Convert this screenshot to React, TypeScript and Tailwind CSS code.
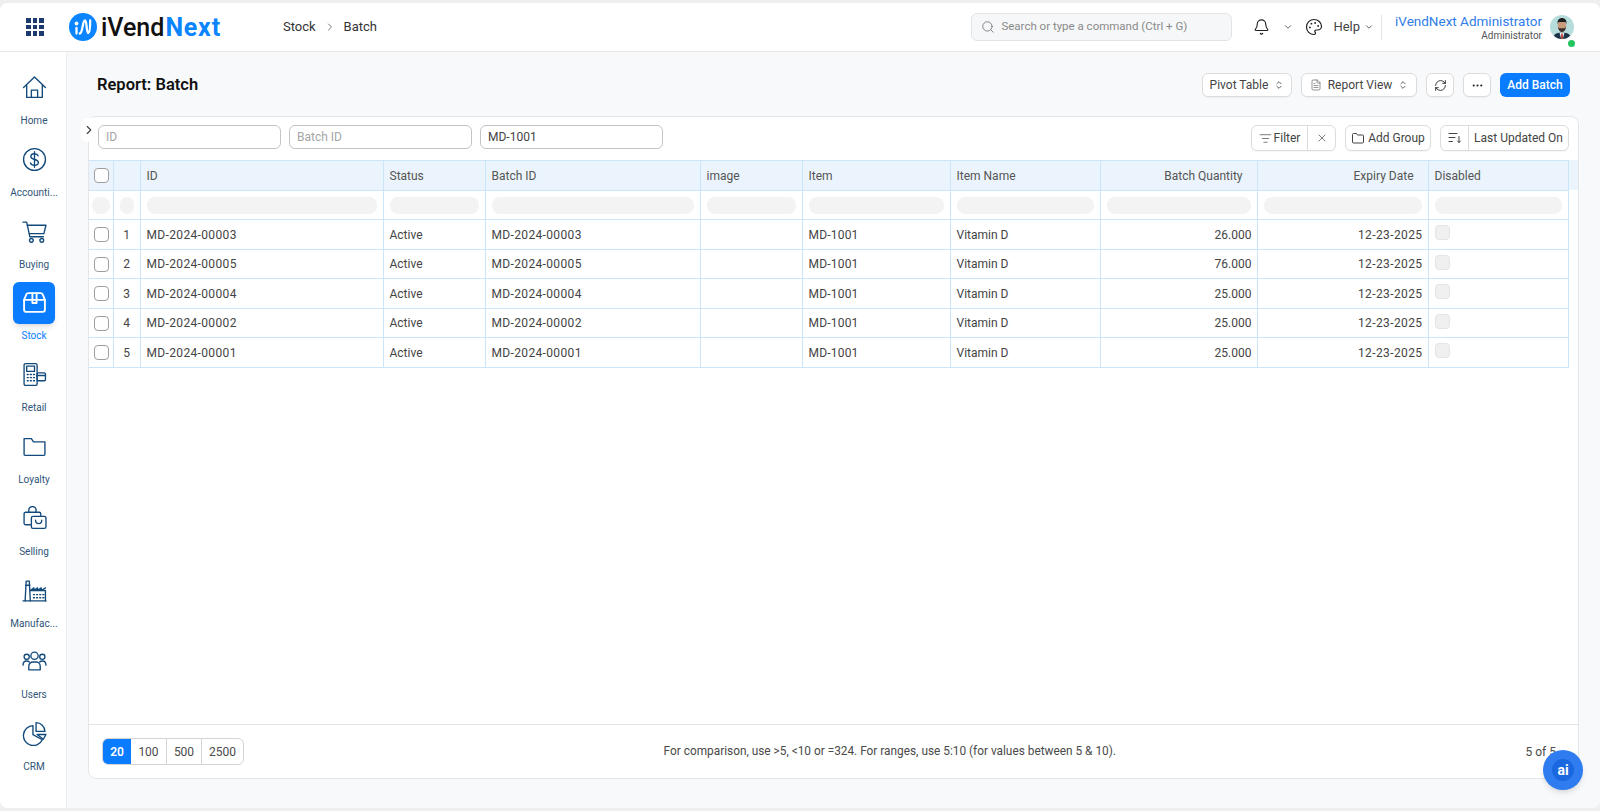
import React from "react";
import {
  Bell,
  ChevronDown,
  ChevronRight,
  ChevronsUpDown,
  Ellipsis,
  FileText,
  ListFilter,
  Palette,
  RefreshCw,
  Search,
  X,
} from "lucide-react";

const COLUMNS = [24, 27, 243, 102, 215, 102, 148, 150, 157, 171, 140];

const HEADERS = [
  { label: "ID" },
  { label: "Status" },
  { label: "Batch ID" },
  { label: "image" },
  { label: "Item" },
  { label: "Item Name" },
  { label: "Batch Quantity", right: true },
  { label: "Expiry Date", right: true },
  { label: "Disabled" },
];

const ROWS = [
  { id: "MD-2024-00003", qty: "26.000" },
  { id: "MD-2024-00005", qty: "76.000" },
  { id: "MD-2024-00004", qty: "25.000" },
  { id: "MD-2024-00002", qty: "25.000" },
  { id: "MD-2024-00001", qty: "25.000" },
];

function NavIcon({ children }: { children: React.ReactNode }) {
  return (
    <svg
      viewBox="0 0 24 24"
      className="w-[25px] h-[25px]"
      fill="none"
      stroke="currentColor"
      strokeWidth="1.3"
      strokeLinecap="round"
      strokeLinejoin="round"
    >
      {children}
    </svg>
  );
}

const NAV = [
  {
    label: "Home",
    icon: (
      <NavIcon>
        <path d="M1.5 12 12 2l10.5 10" />
        <path d="M4.5 10v11.5h15V10" />
        <path d="M9 21.5v-7h6v7" />
      </NavIcon>
    ),
  },
  {
    label: "Accounti...",
    icon: (
      <NavIcon>
        <circle cx="12" cy="12" r="10.5" />
        <path d="M15.5 8.5c-.5-1.3-1.800-2-3.500-2-2 0-3.500 1-3.500 2.700 0 3.800 7.200 1.800 7.200 5.600 0 1.700-1.600 2.700-3.700 2.700-1.800 0-3.300-.8-3.800-2.200" />
        <path d="M12 4.500v15" />
      </NavIcon>
    ),
  },
  {
    label: "Buying",
    icon: (
      <NavIcon>
        <path d="M1 3h3.500l3 14h13" />
        <path d="M5 6h18l-2 8H7" />
        <circle cx="9" cy="20.500" r="1.800" />
        <circle cx="19" cy="20.500" r="1.800" />
      </NavIcon>
    ),
  },
  {
    label: "Stock",
    active: true,
    icon: (
      <NavIcon>
        <path d="M6 3h12a2 2 0 0 1 1.800 1.100L22 9.500V19a2 2 0 0 1-2 2H4a2 2 0 0 1-2-2V9.500l2.200-5.400A2 2 0 0 1 6 3Z" strokeWidth="1.800" />
        <path d="M2 9.500h20" strokeWidth="1.800" />
        <path d="M10 3v9.500h4V3" strokeWidth="1.800" />
      </NavIcon>
    ),
  },
  {
    label: "Retail",
    icon: (
      <NavIcon>
        <rect x="2" y="1.500" width="12.500" height="21" rx="1.500" />
        <rect x="4.500" y="4" width="7.500" height="5" />
        <path d="M5 12h1M8 12h1M11 12h1M5 15h1M8 15h1M11 15h1M5 18h1M8 18h1M11 18h1" />
        <rect x="14.500" y="10.500" width="8" height="7.500" rx="1" />
        <path d="M14.500 13h8" />
      </NavIcon>
    ),
  },
  {
    label: "Loyalty",
    icon: (
      <NavIcon>
        <path d="M2 19.500V4.500h7l2 3h11v12a1 1 0 0 1-1 1H3a1 1 0 0 1-1-1Z" />
      </NavIcon>
    ),
  },
  {
    label: "Selling",
    icon: (
      <NavIcon>
        <path d="M8 18H3.500A1.500 1.500 0 0 1 2 16.500V7.500A1.500 1.500 0 0 1 3.500 6h13A1.500 1.500 0 0 1 18 7.500V9" />
        <path d="M6.500 6V4a3.500 3.500 0 0 1 7 0v2" />
        <rect x="9" y="10" width="14" height="11.500" rx="1.500" />
        <path d="M13 13.500c0 4.500 6 4.500 6 0" />
      </NavIcon>
    ),
  },
  {
    label: "Manufac...",
    icon: (
      <NavIcon>
        <path d="M1 22h22" />
        <path d="M3 22 4 3h3l1 19" />
        <path d="M3.500 7h4" />
        <path d="M8 12h14.500v10" />
        <path d="M8 12l3.500-2.500V12l3.500-2.500V12l3.500-2.500V12l4-2.500" />
        <path d="M11 16h1M14 16h1M17 16h1M20 16h1M11 19h1M14 19h1M17 19h1M20 19h1" />
      </NavIcon>
    ),
  },
  {
    label: "Users",
    icon: (
      <NavIcon>
        <circle cx="12" cy="6.500" r="3.500" />
        <circle cx="4.500" cy="7.500" r="2.500" />
        <circle cx="19.500" cy="7.500" r="2.500" />
        <path d="M6.500 20v-3.500a4 4 0 0 1 4-4h3a4 4 0 0 1 4 4V20Z" />
        <path d="M1 15.500c0-2.500 1.500-4 3.500-4 1 0 1.800.3 2.500 1" />
        <path d="M23 15.500c0-2.500-1.500-4-3.500-4-1 0-1.800.3-2.500 1" />
      </NavIcon>
    ),
  },
  {
    label: "CRM",
    icon: (
      <NavIcon>
        <path d="M10.500 4.500a9.500 9.500 0 1 0 9 13.500l-9-5Z" />
        <path d="M13.500 1.500a8.500 8.500 0 0 1 8.500 8.500h-8.500Z" />
        <path d="M14.500 13h8.500l-2.500 4.500Z" />
      </NavIcon>
    ),
  },
];

function Logo() {
  return (
    <svg viewBox="0 0 28 28" className="w-[28px] h-[28px]">
      <circle cx="14" cy="14" r="14" fill="#0a84ff" />
      <circle cx="7.500" cy="10.500" r="1.900" fill="#fff" />
      <path
        d="M7.500 15v5.500M10.800 20.500c3 0 2.500-13 5.200-13 2 0 1.300 12.500 3.200 12.500 1.700 0 2-6 2-12.500"
        fill="none"
        stroke="#fff"
        strokeWidth="2.300"
        strokeLinecap="round"
      />
    </svg>
  );
}

function GridIcon() {
  const dots = [0, 1, 2, 3, 4, 5, 6, 7, 8];
  return (
    <div className="grid grid-cols-3 gap-[2px] w-[18px]">
      {dots.map((d) => (
        <span key={d} className="w-[4.600px] h-[4.600px] bg-[#1c3a70]" />
      ))}
    </div>
  );
}

function Avatar() {
  return (
    <svg viewBox="0 0 24 24" className="w-[24px] h-[24px] rounded-full">
      <rect width="24" height="24" fill="#b6dcdc" />
      <path d="M3 24c0-4.500 3.500-6.500 9-6.500s9 2 9 6.500Z" fill="#1b3348" />
      <path d="M9.500 17.500h5L12.800 24h-1.600Z" fill="#eef2f4" />
      <path d="M11.300 18.500h1.400l.3 5.500h-2Z" fill="#b5342f" />
      <ellipse cx="12" cy="10.500" rx="4.300" ry="5.500" fill="#c99a7c" />
      <path d="M7.500 9c-.4-4 1.800-6 4.500-6s4.900 2 4.500 6l-1-2h-7Z" fill="#1d1f22" />
      <path d="M8 12c.5 3.500 2 5 4 5s3.500-1.500 4-5l-1.500 1.200h-5Z" fill="#3a2f2a" />
    </svg>
  );
}

function SortIcon() {
  return (
    <svg viewBox="0 0 14 14" className="w-[14px] h-[14px]" fill="none" stroke="#444" strokeWidth="1" strokeLinecap="round">
      <path d="M1 2.500h8M1 6.500h6M1 10.500h3.500" />
      <path d="M11 5.500v6M9.500 10l1.500 1.500 1.500-1.500" />
    </svg>
  );
}

function GroupIcon() {
  return (
    <svg viewBox="0 0 14 14" className="w-[14px] h-[14px]" fill="none" stroke="#444" strokeWidth="1" strokeLinejoin="round">
      <path d="M1.500 3.500a1 1 0 0 1 1-1h3l1 1.500h5a1 1 0 0 1 1 1v6a1 1 0 0 1-1 1h-9a1 1 0 0 1-1-1Z" />
    </svg>
  );
}

function Button({ className, children }: { className?: string; children: React.ReactNode }) {
  return (
    <div
      className={`h-[24px] flex items-center justify-center bg-white border border-[#dcdcdc] rounded-md text-[12px] text-[#444] shadow-[0_1px_1px_rgba(0,0,0,0.04)] ${className}`}
    >
      {children}
    </div>
  );
}

function FilterInput({ placeholder, value }: { placeholder?: string; value?: string }) {
  return (
    <div className="w-[183px] h-[24px] flex items-center px-[7px] bg-white border border-[#c4c4c4] rounded-md text-[12px]">
      {value ? (
        <span className="text-[#444]">{value}</span>
      ) : (
        <span className="text-[#a5a5a5]">{placeholder}</span>
      )}
    </div>
  );
}

function Checkbox({ disabled }: { disabled?: boolean }) {
  return (
    <span
      className={
        disabled
          ? "block w-[15px] h-[15px] rounded-[4px] bg-[#f0f0f0] border border-[#e4e4e4]"
          : "block w-[15px] h-[15px] rounded-[4px] bg-white border border-[#9e9e9e]"
      }
    />
  );
}

export default function App() {
  return (
    <div
      className="h-screen bg-[#efefef] py-[3px] overflow-hidden"
      style={{ fontFamily: 'Roboto, "Noto Sans", sans-serif' }}
    >
      <div className="h-full flex flex-col bg-white rounded-t-lg rounded-b-lg overflow-hidden">
        <header className="h-[49px] shrink-0 flex items-center border-b border-[#e8e8e8] bg-white">
          <div className="w-[69px] pl-[26px] shrink-0">
            <GridIcon />
          </div>
          <Logo />
          <div className="ml-[4px] text-[25px] leading-none font-medium text-[#111]">
            iVend<span className="ml-[1px] font-bold tracking-[0.8px] text-[#0a84ff]">Next</span>
          </div>
          <nav className="ml-[62px] flex items-center gap-[8px] text-[13px] text-[#333]">
            <span>Stock</span>
            <ChevronRight className="w-[12px] h-[12px] text-[#777]" />
            <span>Batch</span>
          </nav>
          <div className="ml-auto flex items-center">
            <div className="w-[261px] h-[28px] flex items-center gap-[6px] pl-[9px] bg-[#f6f7f8] border border-[#e2e4e6] rounded-md text-[11.500px] text-[#8a8a8a]">
              <Search className="w-[14px] h-[14px] text-[#777]" strokeWidth={1.5} />
              <span>Search or type a command (Ctrl + G)</span>
            </div>
            <Bell className="ml-[21px] w-[17px] h-[18px] text-[#222]" strokeWidth={1.6} />
            <ChevronDown className="ml-[13px] w-[10px] h-[10px] text-[#444]" />
            <Palette className="ml-[12px] w-[18px] h-[18px] text-[#222]" strokeWidth={1.6} />
            <span className="ml-[10px] text-[13px] text-[#444]">Help</span>
            <ChevronDown className="ml-[4px] w-[10px] h-[10px] text-[#444]" />
            <div className="ml-[7px] w-px h-[25px] bg-[#e4e4e4]" />
            <div className="ml-[13px] flex flex-col items-end">
              <span className="text-[13.500px] leading-[18px] text-[#2f7de8]">iVendNext Administrator</span>
              <span className="text-[10px] leading-[12px] text-[#555]">Administrator</span>
            </div>
            <div className="relative ml-[8px] mr-[26px]">
              <Avatar />
              <span className="absolute right-[-1px] bottom-[-8px] w-[7px] h-[7px] rounded-full bg-[#22c55e]" />
            </div>
          </div>
        </header>

        <div className="flex-1 min-h-0 flex">
          <aside className="w-[67px] shrink-0 flex flex-col items-center pt-[14.500px] pl-[2px] bg-white border-r border-[#eceef0]">
            {NAV.map((item) => (
              <div key={item.label} className="h-[71.800px] w-full flex flex-col items-center">
                <div
                  className={
                    item.active
                      ? "w-[42px] h-[42px] flex items-center justify-center rounded-md bg-[#0a7cff] text-white shadow-md"
                      : "w-[42px] h-[42px] flex items-center justify-center text-[#134a7c]"
                  }
                >
                  {item.icon}
                </div>
                <span
                  className={
                    item.active
                      ? "mt-[5.500px] text-[10px] leading-[14px] text-[#0a7cff]"
                      : "mt-[5.500px] text-[10px] leading-[14px] text-[#2f5578]"
                  }
                >
                  {item.label}
                </span>
              </div>
            ))}
          </aside>

          <main className="flex-1 min-w-0 flex flex-col px-[21px] bg-[#f8f9fb]">
            <div className="h-[64px] shrink-0 pt-[21px] pl-[9px] pr-[9px] flex items-start justify-between">
              <h1 className="h-[24px] pt-[1px] flex items-center text-[16.500px] font-semibold text-[#111]">Report: Batch</h1>
              <div className="flex items-center">
                <Button className="w-[90px] gap-[6px]">
                  Pivot Table
                  <ChevronsUpDown className="w-[10px] h-[10px]" />
                </Button>
                <Button className="ml-[9px] w-[116px] gap-[6px]">
                  <FileText className="w-[12px] h-[12px] text-[#666]" strokeWidth={1.4} />
                  Report View
                  <ChevronsUpDown className="w-[10px] h-[10px]" />
                </Button>
                <Button className="ml-[9px] w-[28px]">
                  <RefreshCw className="w-[13px] h-[13px] text-[#222]" strokeWidth={1.6} />
                </Button>
                <Button className="ml-[9px] w-[28px]">
                  <Ellipsis className="w-[13px] h-[13px] text-[#222]" />
                </Button>
                <div className="ml-[9px] w-[70px] h-[24px] flex items-center justify-center rounded-md bg-[#0a7cff] text-white text-[12px] font-medium">
                  Add Batch
                </div>
              </div>
            </div>

            <section className="relative flex-1 min-h-0 mb-[29px] flex flex-col bg-white border border-[#e4e6e8] rounded-lg">
              <div className="absolute left-[-8px] top-[1px] w-[15px] h-[24px] flex items-center justify-center bg-white rounded-l-md">
                <ChevronRight className="w-[14px] h-[14px] text-[#444]" />
              </div>

              <div className="h-[43px] shrink-0 flex items-start pt-[8px] pl-[9px] pr-[9px]">
                <div className="flex items-center gap-[8px]">
                  <FilterInput placeholder="ID" />
                  <FilterInput placeholder="Batch ID" />
                  <FilterInput value="MD-1001" />
                </div>
                <div className="ml-auto flex items-center">
                  <Button className="w-[85px] h-[26px] justify-start">
                    <div className="flex-1 flex items-center justify-center gap-[2px]">
                      <ListFilter className="w-[13px] h-[13px] text-[#555]" strokeWidth={1.4} />
                      Filter
                    </div>
                    <div className="w-[28px] h-full flex items-center justify-center border-l border-[#dcdcdc]">
                      <X className="w-[12px] h-[12px] text-[#444]" strokeWidth={1.4} />
                    </div>
                  </Button>
                  <Button className="ml-[9px] w-[86px] h-[26px] gap-[3px]">
                    <GroupIcon />
                    Add Group
                  </Button>
                  <Button className="ml-[9px] w-[129px] h-[26px] justify-start">
                    <div className="w-[28px] h-full flex items-center justify-center border-r border-[#dcdcdc]">
                      <SortIcon />
                    </div>
                    <div className="flex-1 text-center">Last Updated On</div>
                  </Button>
                </div>
              </div>

              <div className="flex items-start">
                <table className="w-[1479px] table-fixed border-collapse text-[12px] text-[#444]">
                  <colgroup>
                    {COLUMNS.map((w, i) => (
                      <col key={i} style={{ width: w }} />
                    ))}
                  </colgroup>
                  <thead>
                    <tr className="h-[30px] bg-[#ebf4fc] text-[#555]">
                      <th className="border border-l-0 border-[#cbe5fa] pl-[5px]">
                        <Checkbox />
                      </th>
                      <th className="border border-[#cbe5fa]" />
                      {HEADERS.map((h) => (
                        <th
                          key={h.label}
                          className={
                            h.right
                              ? "border border-[#cbe5fa] pl-[6px] pr-[14px] font-normal text-right"
                              : "border border-[#cbe5fa] px-[6px] font-normal text-left"
                          }
                        >
                          {h.label}
                        </th>
                      ))}
                    </tr>
                    <tr className="h-[29px]">
                      <td className="border border-l-0 border-[#cbe5fa] px-[3px]">
                        <div className="h-[17px] rounded-lg bg-[#f3f3f3]" />
                      </td>
                      <td className="border border-[#cbe5fa] px-[6px]">
                        <div className="h-[17px] rounded-lg bg-[#f3f3f3]" />
                      </td>
                      {HEADERS.map((h) => (
                        <td key={h.label} className="border border-[#cbe5fa] px-[6px]">
                          <div className="h-[17px] rounded-lg bg-[#f3f3f3]" />
                        </td>
                      ))}
                    </tr>
                  </thead>
                  <tbody>
                    {ROWS.map((row, i) => (
                      <tr key={row.id} className="h-[29.500px]">
                        <td className="border border-l-0 border-[#cbe5fa] pl-[5px] pt-[1px]">
                          <Checkbox />
                        </td>
                        <td className="border border-[#cbe5fa] pt-[1px] text-center">{i + 1}</td>
                        <td className="border border-[#cbe5fa] px-[6px] pt-[1px] tracking-[0.35px]">{row.id}</td>
                        <td className="border border-[#cbe5fa] px-[6px] pt-[1px]">Active</td>
                        <td className="border border-[#cbe5fa] px-[6px] pt-[1px] tracking-[0.35px]">{row.id}</td>
                        <td className="border border-[#cbe5fa] px-[6px]" />
                        <td className="border border-[#cbe5fa] px-[6px] pt-[1px] tracking-[0.2px]">MD-1001</td>
                        <td className="border border-[#cbe5fa] px-[6px] pt-[1px]">Vitamin D</td>
                        <td className="border border-[#cbe5fa] pl-[6px] pr-[5px] pt-[1px] text-right">{row.qty}</td>
                        <td className="border border-[#cbe5fa] pl-[6px] pr-[5px] pt-[1px] text-right tracking-[0.4px]">12-23-2025</td>
                        <td className="border border-[#cbe5fa] pl-[6px] align-top pt-[5px]">
                          <Checkbox disabled />
                        </td>
                      </tr>
                    ))}
                  </tbody>
                </table>
                <div className="flex-1 h-[30px] bg-[#ebf4fc]" />
              </div>

              <div className="flex-1" />

              <footer className="h-[54px] shrink-0 flex items-center justify-between pl-[13px] pr-[22px] border-t border-[#e4e4e4] text-[12px] text-[#4a4a4a]">
                <div className="h-[27px] flex items-stretch border border-[#d4d4d4] rounded-md overflow-hidden">
                  <div className="w-[28px] flex items-center justify-center bg-[#0a7cff] text-white font-semibold">20</div>
                  <div className="w-[36px] flex items-center justify-center border-r border-[#d4d4d4]">100</div>
                  <div className="w-[35px] flex items-center justify-center border-r border-[#d4d4d4]">500</div>
                  <div className="w-[41px] flex items-center justify-center">2500</div>
                </div>
                <div className="ml-[10px] text-[11.850px]">
                  For comparison, use &gt;5, &lt;10 or =324. For ranges, use 5:10 (for values between 5 &amp; 10).
                </div>
                <div>5 of 5</div>
              </footer>
            </section>
          </main>
        </div>
      </div>

      <div className="absolute left-[1543px] top-[750px] w-[40px] h-[40px] flex items-center justify-center rounded-full bg-[#2f7bf0] shadow-md">
        <div className="w-[22px] h-[22px] flex items-center justify-center rounded-full bg-[#1a68e0] text-white text-[14px] font-bold leading-none">
          ai
        </div>
      </div>
    </div>
  );
}
